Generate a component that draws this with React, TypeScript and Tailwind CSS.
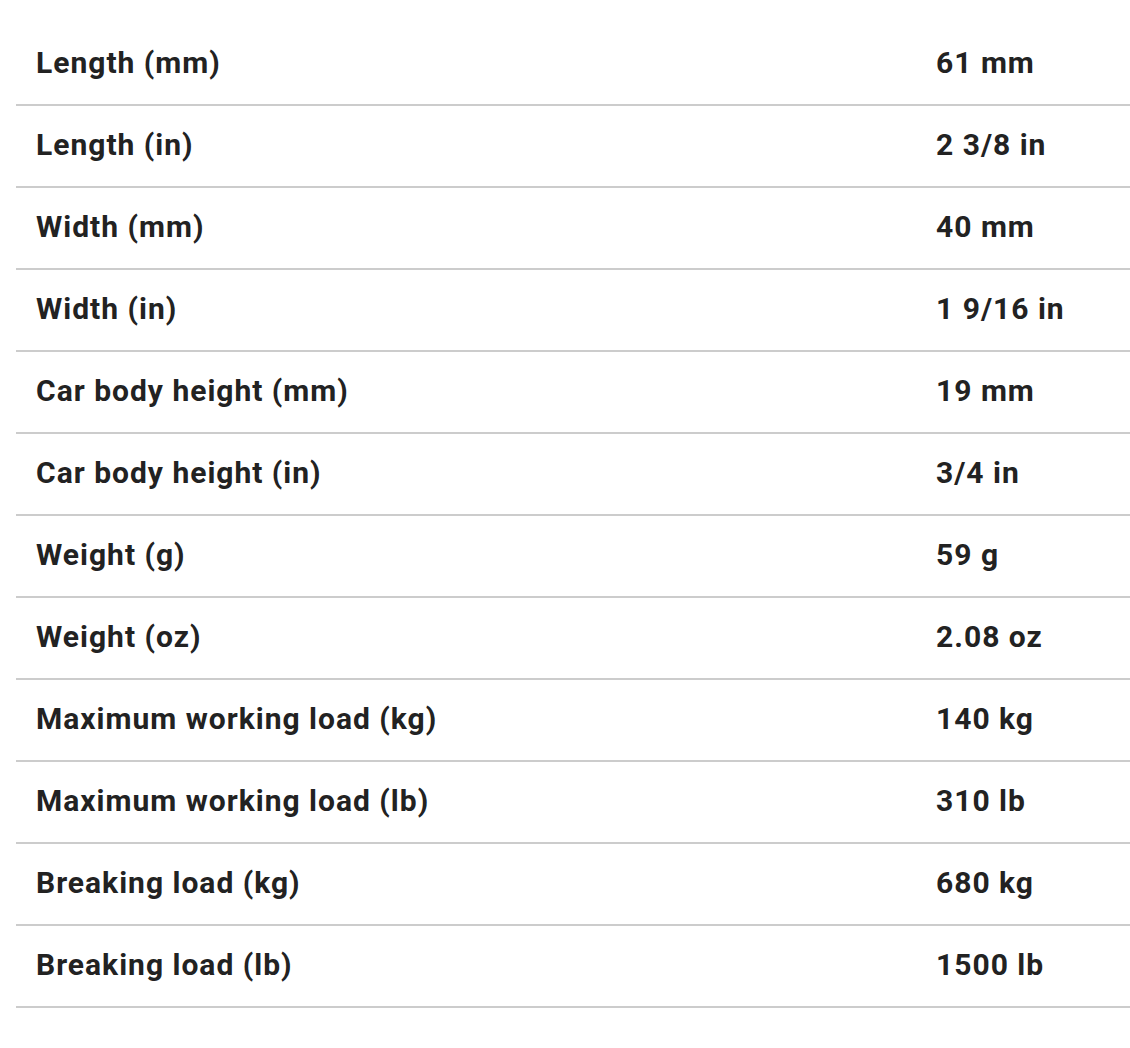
import React from "react";

const rows: [string, string][] = [
  ["Length (mm)", "61 mm"],
  ["Length (in)", "2 3/8 in"],
  ["Width (mm)", "40 mm"],
  ["Width (in)", "1 9/16 in"],
  ["Car body height (mm)", "19 mm"],
  ["Car body height (in)", "3/4 in"],
  ["Weight (g)", "59 g"],
  ["Weight (oz)", "2.08 oz"],
  ["Maximum working load (kg)", "140 kg"],
  ["Maximum working load (lb)", "310 lb"],
  ["Breaking load (kg)", "680 kg"],
  ["Breaking load (lb)", "1500 lb"],
];

export default function App() {
  return (
    <div
      className="w-[1130px] h-[1048px] bg-white pt-[24px] pl-[16px] overflow-hidden"
      style={{ fontFamily: "Roboto, 'Liberation Sans', sans-serif" }}
    >
      <div className="flex flex-col w-[1114px]">
        {rows.map(([k, v]) => (
          <div
            key={k}
            className="flex items-center h-[82px] pb-[4px] border-b-2 border-[#cccccc] text-[30px] tracking-[1px] font-bold text-[#222222]"
          >
            <div className="w-[900px] pl-[20px]">{k}</div>
            <div className="pl-[20px]">{v}</div>
          </div>
        ))}
      </div>
    </div>
  );
}
